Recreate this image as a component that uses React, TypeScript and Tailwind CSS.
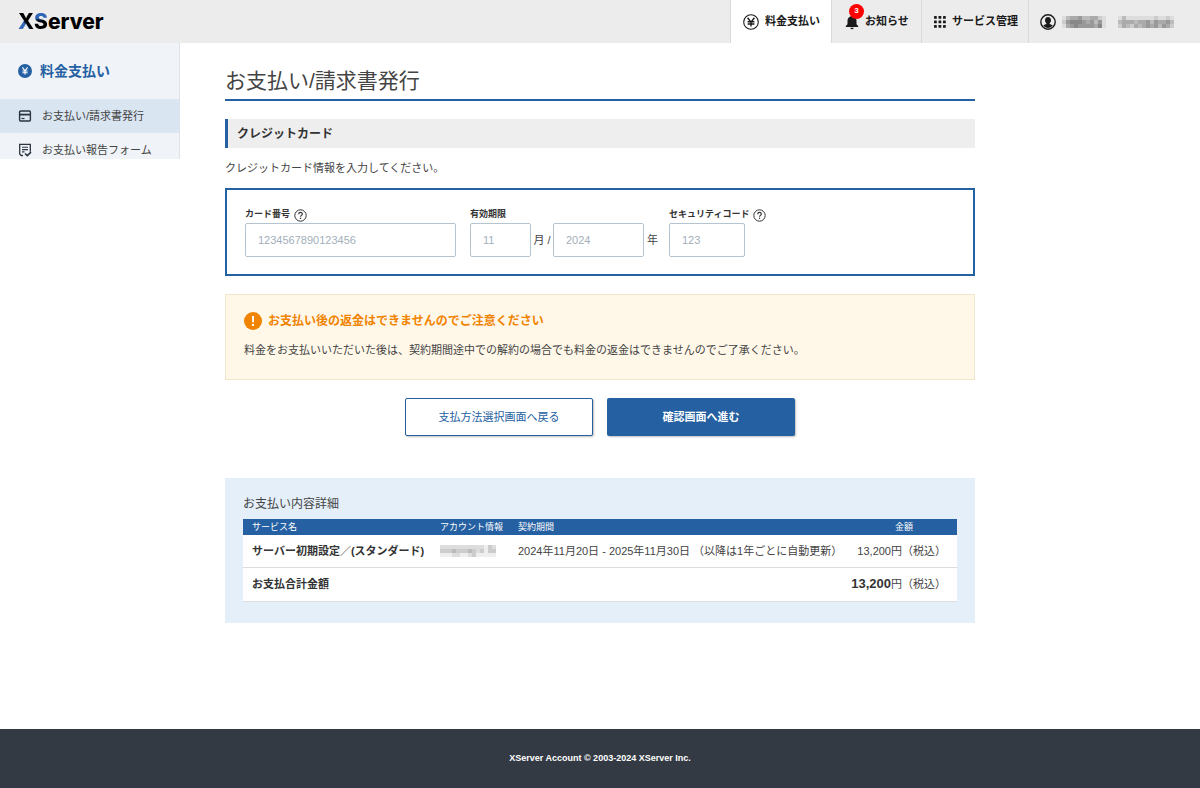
import React from "react";

const JP = "font-['Liberation_Sans','Noto_Sans_CJK_JP',sans-serif]";

function YenOutline() {
  return (
    <svg viewBox="0 0 16 16" className="size-4 shrink-0" fill="none" stroke="#1a1a1a" aria-hidden="true">
      <circle cx="8" cy="8" r="7.3" strokeWidth="1.1" />
      <path d="M4.600 3.800L8 8.200l3.400-4.400M8 8v4.600M4.600 7.700h6.800M4.600 10h6.800" strokeWidth="1.4" />
    </svg>
  );
}

function YenSolid() {
  return (
    <svg viewBox="0 0 14 14" className="size-3.5 shrink-0" aria-hidden="true">
      <circle cx="7" cy="7" r="7" fill="#2460a2" />
      <path d="M4.4 3.4L7 6.8l2.6-3.4M7 6.8v3.8M4.4 7h5.2M4.4 8.8h5.2" stroke="#fff" strokeWidth="1.1" fill="none" />
    </svg>
  );
}

function Bell() {
  return (
    <svg viewBox="0 0 14 16" className="h-4 w-3.5 shrink-0" fill="#1a1a1a" aria-hidden="true">
      <path d="M7 1c.8 0 1.2.5 1.2 1.2C10.300 2.800 11.500 4.600 11.500 6.800v3.400l1.700 1.700v1H.800v-1l1.700-1.700V6.800c0-2.200 1.200-4 3.300-4.600C5.800 1.500 6.200 1 7 1zM5.400 13.700h3.200a1.600 1.600 0 0 1-3.200 0z" />
    </svg>
  );
}

function Dots() {
  const at = [0, 4.5, 9];
  return (
    <svg viewBox="0 0 12 12" className="size-3 shrink-0" fill="#1a1a1a" aria-hidden="true">
      {at.map((y) => at.map((x) => <rect key={`${x}-${y}`} x={x} y={y} width="2.8" height="2.8" rx=".4" />))}
    </svg>
  );
}

function User() {
  return (
    <svg viewBox="0 0 16 16" className="size-4 shrink-0" aria-hidden="true">
      <circle cx="8" cy="8" r="7.2" fill="none" stroke="#1a1a1a" strokeWidth="1.4" />
      <path d="M8 3c1.900 0 3 1.300 3 3.200 0 1.200-.5 2.300-1.300 2.900v.9l3 1.300C11.600 13 9.900 14 8 14s-3.600-1-4.700-2.700l3-1.300v-.9C5.500 8.500 5 7.400 5 6.200 5 4.300 6.100 3 8 3z" fill="#1a1a1a" />
    </svg>
  );
}

function CardIcon() {
  return (
    <svg viewBox="0 0 14 14" className="size-3.5 shrink-0" fill="none" stroke="#2b3440" aria-hidden="true">
      <rect x="1.600" y="2" width="10.800" height="10" rx="1" strokeWidth="1.400" />
      <path d="M1.600 5.600h10.800" strokeWidth="1.800" />
      <path d="M3.500 9.500h3" strokeWidth="1.200" />
    </svg>
  );
}

function ReportIcon() {
  return (
    <svg viewBox="0 0 14 14" className="size-3.5 shrink-0" fill="none" stroke="#2b3440" aria-hidden="true">
      <path d="M5 12.500H3.200L1.700 11V1.300h10.600v7.500" strokeWidth="1.300" />
      <path d="M4 4.300h6M4 6.600h6M4 8.900h2.500" strokeWidth="1.100" />
      <path d="M7 10.500l2.300 2.200 3.700-3.500" strokeWidth="1.600" />
    </svg>
  );
}

function Help({ label }: { label: string }) {
  return (
    <button type="button" aria-label={label} className="shrink-0">
      <svg viewBox="0 0 13 13" className="size-[13px]" fill="none" stroke="#333" aria-hidden="true">
        <circle cx="6.500" cy="6.500" r="5.700" strokeWidth="1" />
        <path d="M4.700 5.200c0-1.100.8-1.800 1.800-1.800s1.800.7 1.800 1.600c0 1.300-1.800 1.400-1.800 2.800" strokeWidth="1.200" />
        <path d="M6.500 8.700v1.200" strokeWidth="1.300" />
      </svg>
    </button>
  );
}

function Warning() {
  return (
    <svg viewBox="0 0 18 18" className="size-[18px] shrink-0" aria-hidden="true">
      <circle cx="9" cy="9" r="9" fill="#f08300" />
      <path d="M7.900 4h2.200l-.3 6.400H8.200z" fill="#fff" />
      <circle cx="9" cy="12.900" r="1.200" fill="#fff" />
    </svg>
  );
}

const USER_TONES = [
  "dbaa9bbaacd   dbdddddddcddcd",
  "c98889a9b9d   baaabaa9b9aa9b",
  "da989999a8d   cabcaba9a9b9ac",
];
const ACCOUNT_TONES = ["dddddddddddecd", "cccbcccbcdcecc", "eeeddeedceeeee"];

function Mosaic({ rows, cell, label }: { rows: string[]; cell: number; label: string }) {
  const cols = Math.max(...rows.map((r) => r.length));
  return (
    <svg width={cols * cell} height={rows.length * cell} role="img" aria-label={label} shapeRendering="crispEdges">
      {rows.map((row, y) =>
        [...row].map((c, x) =>
          c === " " ? null : (
            <rect key={`${x}-${y}`} x={x * cell} y={y * cell} width={cell} height={cell} fill={`#${c}${c}${c}`} />
          ),
        ),
      )}
    </svg>
  );
}

const navItem = "flex items-center gap-1.5 border-l border-[#d9d9d9] text-[11px] font-bold text-[#1a1a1a]";
const field =
  "block h-[34px] rounded-xs border border-[#b4c4d0] bg-white px-3 text-[11px] text-[#333] placeholder:text-[#a3afba]";
const fieldLabel = "flex h-4 items-center gap-1 text-[9px] font-bold text-[#333]";

export default function App() {
  return (
    <div className={`flex min-h-screen flex-col bg-white text-[11px] text-[#444] ${JP}`}>
      <header className="flex h-[43px] items-stretch justify-between bg-[#ececec]">
        <a href="#" className="flex items-center pl-[18px] font-['Inter',sans-serif] text-[21px] leading-none font-extrabold text-black">
          <span className="bg-linear-to-tr from-[#2f66b5] from-40% to-black to-50% bg-clip-text text-transparent">X</span>
          <span className="bg-linear-to-b from-[#2f66b5] from-35% to-black to-50% bg-clip-text text-transparent">S</span>
          erver
        </a>
        <nav className="flex items-stretch">
          <a href="#" className={`${navItem} w-[101px] bg-white pl-3`}>
            <YenOutline />
            料金支払い
          </a>
          <a href="#" className={`${navItem} w-[90px] pl-[13px]`}>
            <span className="relative">
              <Bell />
              <span className="absolute -top-[10px] left-1 flex size-[15px] items-center justify-center rounded-full bg-[#f00] text-[8px] text-white">
                3
              </span>
            </span>
            お知らせ
          </a>
          <a href="#" className={`${navItem} w-[107px] pl-3`}>
            <Dots />
            サービス管理
          </a>
          <a href="#" className={`${navItem} w-[172px] pl-[11px]`}>
            <User />
            <Mosaic rows={USER_TONES} cell={4} label="アカウント" />
          </a>
        </nav>
      </header>

      <div className="grid grid-cols-[180px_1fr_180px] items-start">
        <aside className="h-[116px] overflow-hidden border-r border-[#dde3e8] bg-[#f0f4f8]">
          <h2 className="flex h-14 items-center gap-2 pl-[18px] text-sm font-bold text-[#2460a2]">
            <YenSolid />
            料金支払い
          </h2>
          <ul>
            <li>
              <a href="#" className="flex h-[34px] items-center gap-2.5 bg-[#d9e6f2] pl-[18px]">
                <CardIcon />
                お支払い/請求書発行
              </a>
            </li>
            <li>
              <a href="#" className="flex h-[34px] items-center gap-2.5 pl-[18px]">
                <ReportIcon />
                お支払い報告フォーム
              </a>
            </li>
          </ul>
        </aside>

        <main className="px-[45px] pt-[22px] pb-10">
          <h1 className="border-b-2 border-[#2460a2] pb-0.5 text-[21px] leading-8 text-[#444]">お支払い/請求書発行</h1>
          <h2 className="mt-[18px] flex h-[29px] items-center border-l-[3px] border-[#2460a2] bg-[#eee] pl-[9px] text-xs font-bold text-[#333]">
            クレジットカード
          </h2>
          <p className="mt-3 leading-4">クレジットカード情報を入力してください。</p>

          <form>
            <div className="mt-3 flex h-[88px] items-start border-2 border-[#2460a2] px-[18px] pt-[17px]">
              <div>
                <div className={fieldLabel}>
                  <label htmlFor="number">カード番号</label>
                  <Help label="カード番号について" />
                </div>
                <input id="number" placeholder="1234567890123456" className={`${field} w-[211px]`} />
              </div>
              <div className="ml-[14px]">
                <div className={fieldLabel}>
                  <label htmlFor="month">有効期限</label>
                </div>
                <div className="flex items-center">
                  <input id="month" placeholder="11" className={`${field} w-[61px]`} />
                  <span className="w-[22px] text-center">月 /</span>
                  <input id="year" aria-label="有効期限の年" placeholder="2024" className={`${field} w-[91px]`} />
                  <span className="w-[17px] text-center">年</span>
                </div>
              </div>
              <div className="ml-2">
                <div className={fieldLabel}>
                  <label htmlFor="code">セキュリティコード</label>
                  <Help label="セキュリティコードについて" />
                </div>
                <input id="code" placeholder="123" className={`${field} w-[76px]`} />
              </div>
            </div>

            <section className="mt-[18px] h-[86px] border border-[#f0e6cc] bg-[#fff8e9] px-[18px] pt-[17px]">
              <h3 className="flex items-center gap-1.5 text-xs leading-[18px] font-bold text-[#f08300]">
                <Warning />
                お支払い後の返金はできませんのでご注意ください
              </h3>
              <p className="mt-3 leading-4">
                料金をお支払いいただいた後は、契約期間途中での解約の場合でも料金の返金はできませんのでご了承ください。
              </p>
            </section>

            <div className="mt-[18px] flex justify-center gap-[14px]">
              <button
                type="button"
                className="h-[38px] w-[188px] rounded-xs border border-[#2460a2] bg-white text-[#2460a2] shadow-[1px_1px_2px_rgba(0,0,0,0.25)]"
              >
                支払方法選択画面へ戻る
              </button>
              <button
                type="button"
                className="h-[38px] w-[188px] rounded-xs bg-[#2460a2] font-bold text-white shadow-[1px_1px_2px_rgba(0,0,0,0.25)]"
              >
                確認画面へ進む
              </button>
            </div>
          </form>

          <section className="mt-[42px] bg-[#e4effa] px-[18px] pt-3.5 pb-[21px]">
            <h3 className="pb-0.5 text-xs leading-[25px] text-[#444]">お支払い内容詳細</h3>
            <table className="w-full table-fixed bg-white text-left">
              <colgroup>
                <col className="w-[189px]" />
                <col className="w-[78px]" />
                <col />
                <col className="w-[106px]" />
              </colgroup>
              <thead>
                <tr className="h-4 bg-[#2460a2] text-[9px] leading-4 text-white">
                  <th className="pl-[9px] font-normal">サービス名</th>
                  <th className="pl-2 font-normal">アカウント情報</th>
                  <th className="pl-2 font-normal">契約期間</th>
                  <th className="text-center font-normal">金額</th>
                </tr>
              </thead>
              <tbody>
                <tr className="h-8 border-b border-[#ddd]">
                  <td className="pl-[9px] font-bold whitespace-nowrap text-[#333]">サーバー初期設定／(スタンダード)</td>
                  <td className="pl-2">
                    <Mosaic rows={ACCOUNT_TONES} cell={4} label="アカウント情報" />
                  </td>
                  <td className="pl-2 whitespace-nowrap">2024年11月20日 - 2025年11月30日 （以降は1年ごとに自動更新）</td>
                  <td className="pr-[11px] text-right whitespace-nowrap">13,200円（税込）</td>
                </tr>
                <tr className="h-[34px] border-b border-[#ddd]">
                  <td className="pl-[9px] font-bold text-[#333]">お支払合計金額</td>
                  <td colSpan={3} className="pr-[11px] text-right">
                    <strong className="text-[13px] text-[#333]">13,200</strong>円（税込）
                  </td>
                </tr>
              </tbody>
            </table>
          </section>
        </main>
      </div>

      <footer className="mt-auto flex h-[59px] items-center justify-center bg-[#343a43] text-[9px] font-bold text-white">
        XServer Account © 2003-2024 XServer Inc.
      </footer>
    </div>
  );
}
